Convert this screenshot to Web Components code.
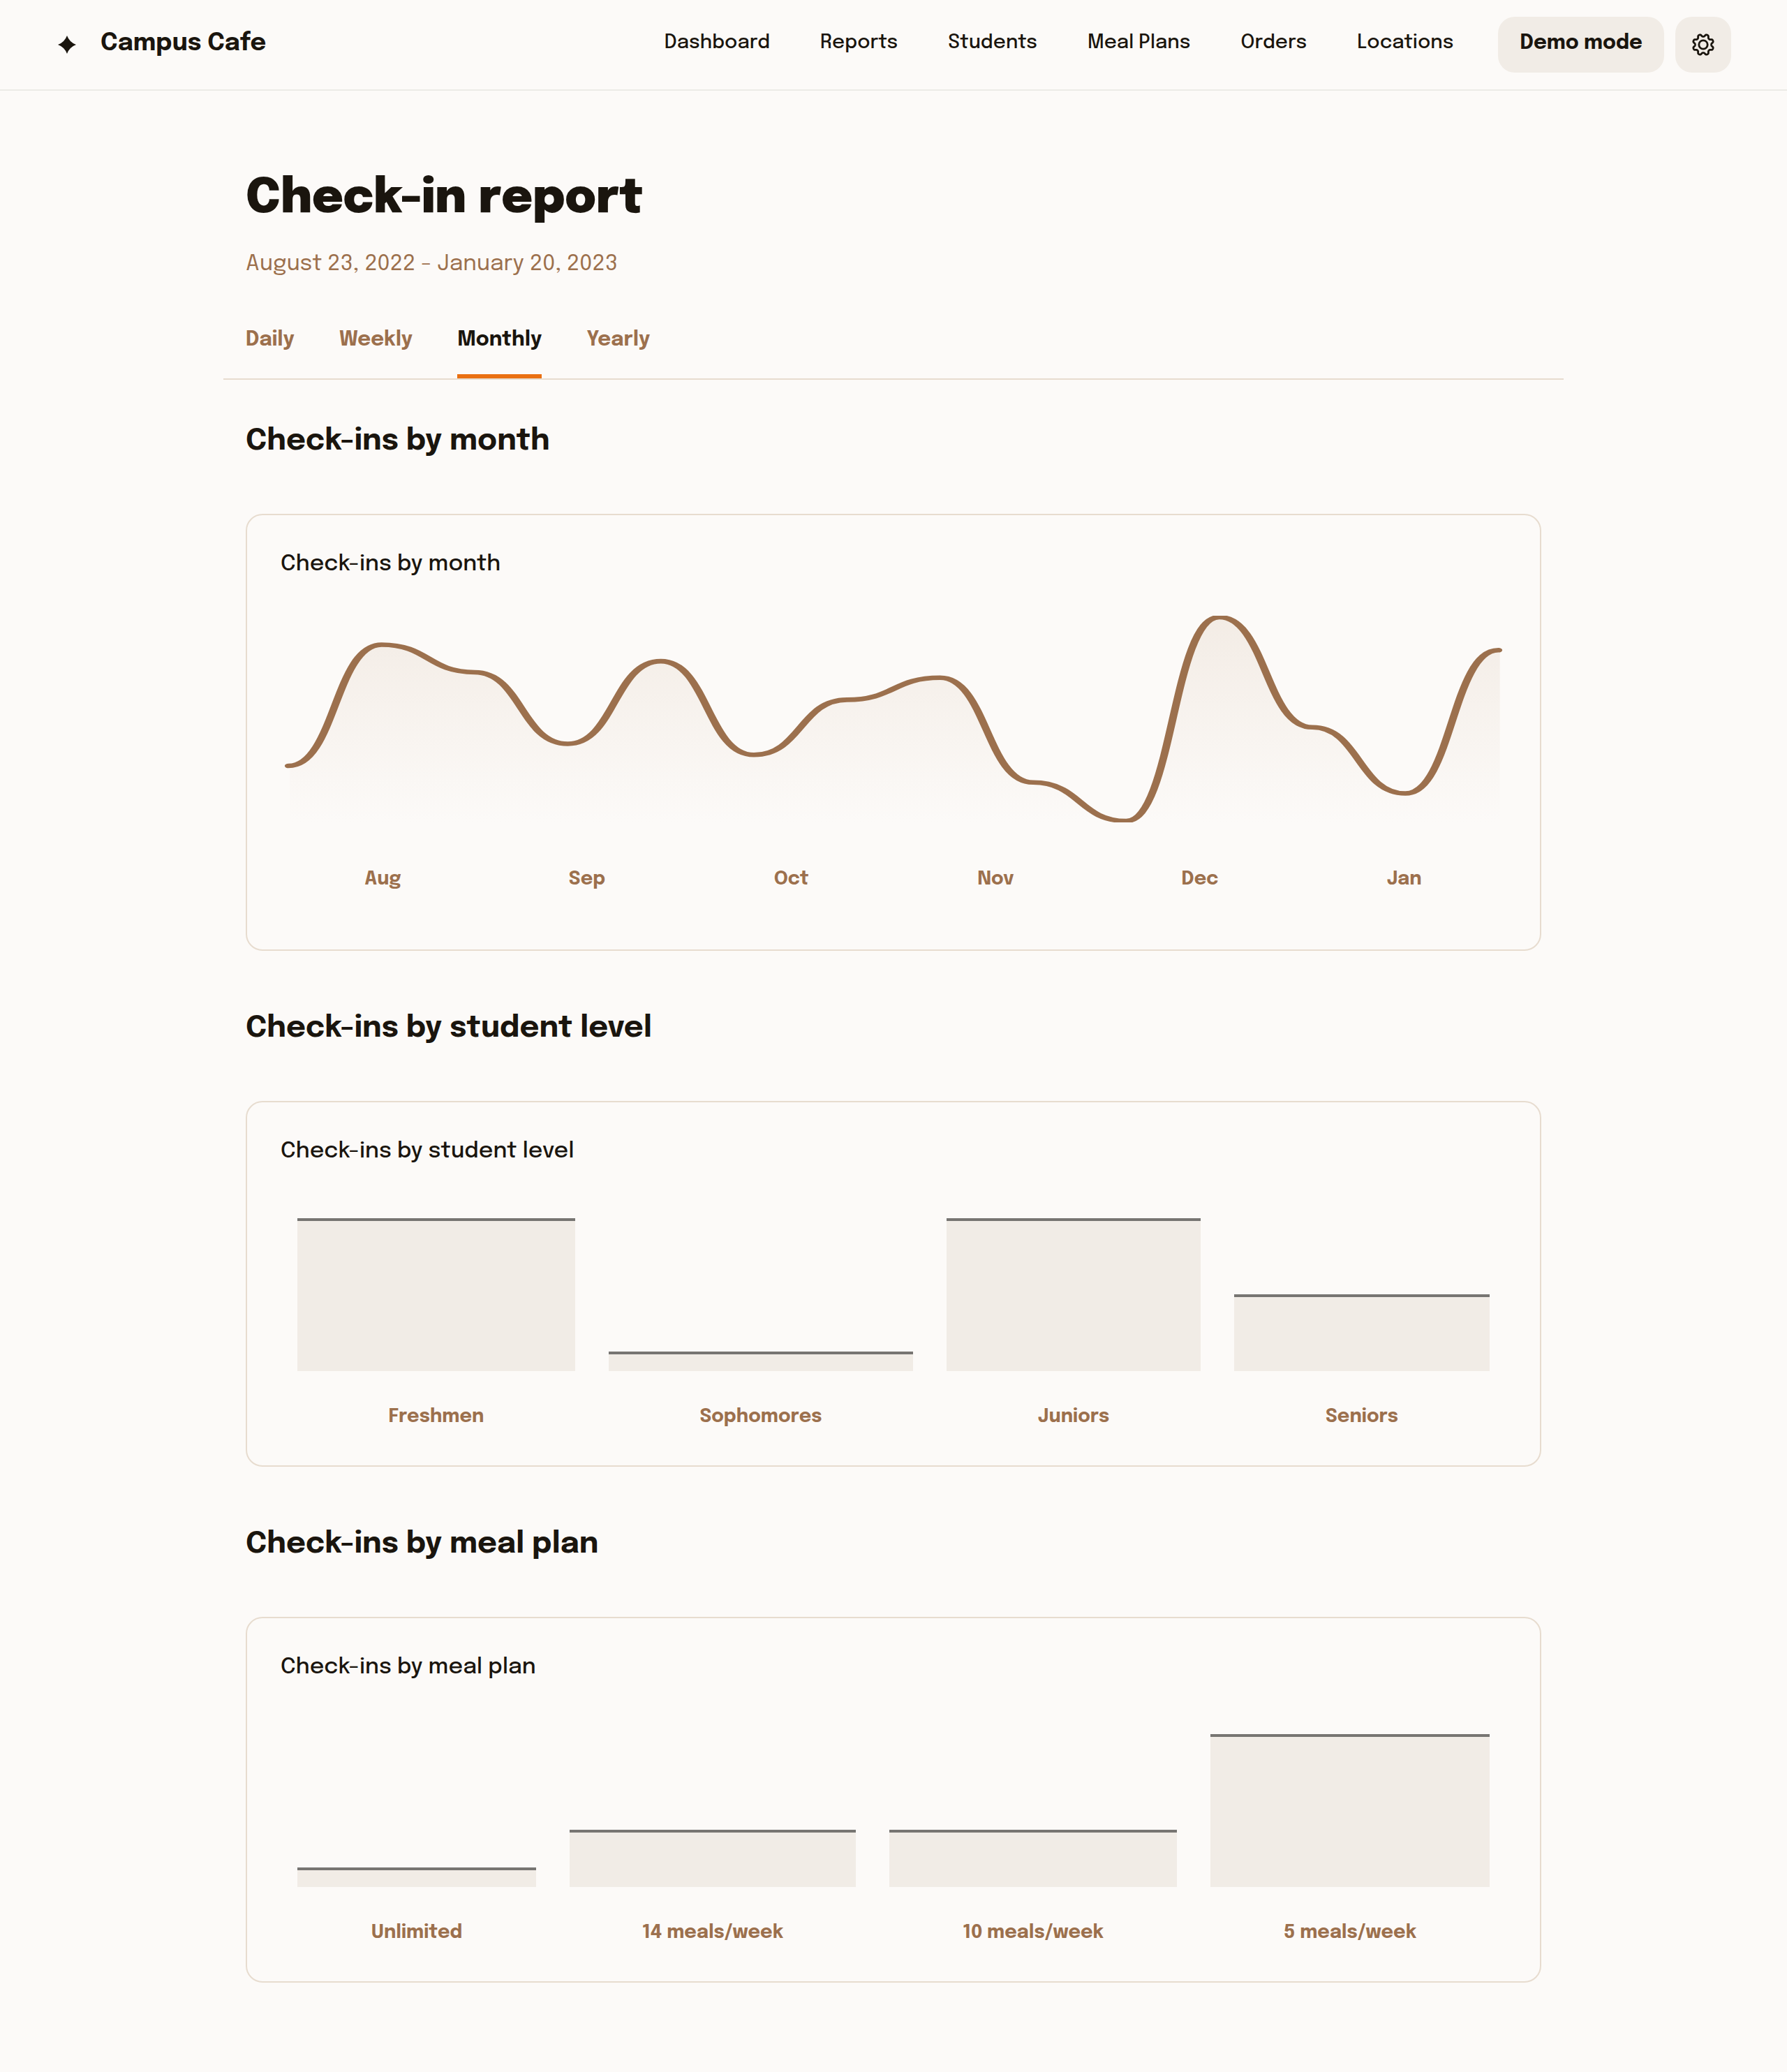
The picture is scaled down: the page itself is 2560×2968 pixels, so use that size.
<!DOCTYPE html>
<html lang="en">
<head>
<meta charset="utf-8">
<meta name="viewport" content="width=device-width, initial-scale=1">
<title>Check-in report · Campus Cafe</title>
<style>
  :root {
    --bg: #fcfaf8;
    --ink: #1a150e;
    --brown: #9c704d;
    --sand: #f1ece6;
    --line: #e7dccf;
    --hairline: #ecebe7;
    --bar-top: #777572;
    --accent: #ea7012;
  }
  body {
    margin: 0;
    background: var(--bg);
    color: var(--ink);
    font-family: Epilogue, Inter, "Liberation Sans", sans-serif;
  }
</style>
</head>
<body>
<campus-header>
  <span slot="brand">Campus Cafe</span>
  <nav-link href="#dashboard">Dashboard</nav-link>
  <nav-link href="#reports">Reports</nav-link>
  <nav-link href="#students">Students</nav-link>
  <nav-link href="#meal-plans">Meal Plans</nav-link>
  <nav-link href="#orders">Orders</nav-link>
  <nav-link href="#locations">Locations</nav-link>
  <soft-button slot="actions">Demo mode</soft-button>
  <soft-button slot="actions" icon label="Settings"><gear-icon></gear-icon></soft-button>
</campus-header>

<report-page>
  <span slot="title">Check-in report</span>
  <span slot="range">August 23, 2022 - January 20, 2023</span>
  <report-tab slot="tabs" href="#daily">Daily</report-tab>
  <report-tab slot="tabs" href="#weekly">Weekly</report-tab>
  <report-tab slot="tabs" href="#monthly" selected>Monthly</report-tab>
  <report-tab slot="tabs" href="#yearly">Yearly</report-tab>

  <report-section heading="Check-ins by month">
    <line-chart
      values="54.5 10.5 20.5 46.5 16.5 50.5 30.5 22.5 60.5 74.5 0.5 40.5 64.5 12.5"
      labels="Aug,Sep,Oct,Nov,Dec,Jan"></line-chart>
  </report-section>
  <report-section heading="Check-ins by student level">
    <bar-chart>
      <chart-bar size="398" height="219">Freshmen</chart-bar>
      <chart-bar size="436" height="28">Sophomores</chart-bar>
      <chart-bar size="364" height="219">Juniors</chart-bar>
      <chart-bar size="366" height="110">Seniors</chart-bar>
    </bar-chart>
  </report-section>
  <report-section heading="Check-ins by meal plan">
    <bar-chart>
      <chart-bar size="342" height="28">Unlimited</chart-bar>
      <chart-bar size="410" height="82">14 meals/week</chart-bar>
      <chart-bar size="412" height="82">10 meals/week</chart-bar>
      <chart-bar size="400" height="219">5 meals/week</chart-bar>
    </bar-chart>
  </report-section>
</report-page>

<script>
  class BaseElement extends HTMLElement {
    constructor() {
      super();
      this.attachShadow({ mode: 'open' });
    }
    connectedCallback() {
      this.shadowRoot.innerHTML = this.render();
    }
  }

  customElements.define('campus-header', class extends BaseElement {
    render() {
      return `
        <style>
          :host { display: block; border-bottom: 2px solid var(--hairline); }
          header { display: flex; align-items: center; height: 128px; padding: 0 80px; }
          .brand { display: flex; align-items: center; gap: 32px; color: inherit; text-decoration: none;
                   font-size: 35px; font-weight: 700; line-height: 44px; }
          .brand svg { width: 32px; height: 32px; display: block; }
          .brand slot { display: block; padding-bottom: 4px; }
          nav { display: flex; gap: 72px; margin-left: auto; }
          .actions { display: flex; gap: 16px; margin-left: 64px; }
        </style>
        <header>
          <a class="brand" href="#home">
            <svg viewBox="-16 -16 32 32" aria-hidden="true"><path fill="currentColor" d="M0-13Q3.5-3.5 13 0Q3.5 3.5 0 13Q-3.5 3.5-13 0Q-3.5-3.5 0-13Z"/></svg>
            <slot name="brand"></slot>
          </a>
          <nav aria-label="Main"><slot></slot></nav>
          <div class="actions"><slot name="actions"></slot></div>
        </header>`;
    }
  });

  customElements.define('nav-link', class extends BaseElement {
    render() {
      return `
        <style>
          :host { display: block; }
          a { display: block; padding-bottom: 4px; color: inherit; text-decoration: none;
              font-size: 28px; font-weight: 500; line-height: 40px; white-space: nowrap; }
        </style>
        <a href="${this.getAttribute('href')}"><slot></slot></a>`;
    }
  });

  customElements.define('soft-button', class extends BaseElement {
    render() {
      const label = this.getAttribute('label');
      return `
        <style>
          :host { display: block; }
          button { display: flex; align-items: center; justify-content: center; height: 80px;
                   padding: 0 31px 4px; border: 0; border-radius: 24px; background: var(--sand);
                   color: inherit; font: inherit; font-size: 29px; font-weight: 700; line-height: 40px;
                   white-space: nowrap; cursor: pointer; }
          :host([icon]) button { width: 80px; padding: 0; }
        </style>
        <button type="button"${label ? ` aria-label="${label}"` : ''}><slot></slot></button>`;
    }
  });

  customElements.define('gear-icon', class extends BaseElement {
    render() {
      // Eight rounded teeth: the radius swings between valley and tip.
      const steps = 192;
      let d = '';
      for (let i = 0; i < steps; i++) {
        const a = (i / steps) * Math.PI * 2;
        const wave = Math.cos(8 * (a - Math.PI / 8));
        const r = 13.3 + 1.7 * Math.tanh(1.6 * wave) / Math.tanh(1.6);
        d += `${i ? 'L' : 'M'}${(r * Math.cos(a)).toFixed(2)} ${(r * Math.sin(a)).toFixed(2)}`;
      }
      return `
        <style>
          :host { display: block; width: 40px; height: 40px; }
          svg { display: block; width: 100%; height: 100%; }
        </style>
        <svg viewBox="-20 -20 40 40" fill="none" stroke="currentColor" stroke-width="2.8" stroke-linejoin="round" aria-hidden="true">
          <path d="${d}Z"/><circle r="6.2"/>
        </svg>`;
    }
  });

  customElements.define('report-page', class extends BaseElement {
    render() {
      return `
        <style>
          :host { display: block; max-width: 1920px; margin: 0 auto; padding: 111px 0 128px; }
          .intro { padding: 0 32px; }
          h1, p { margin: 0; }
          h1 { font-size: 68px; font-weight: 900; line-height: 88px; }
          p { margin-top: 30px; color: var(--brown); font-size: 32px; line-height: 40px; }
          nav { display: flex; gap: 64px; margin-top: 68px; padding: 0 32px; border-bottom: 2px solid var(--line); }
          .sections { display: flex; flex-direction: column; gap: 83px; padding: 60px 32px 0; }
        </style>
        <main>
          <div class="intro">
            <h1><slot name="title"></slot></h1>
            <p><slot name="range"></slot></p>
          </div>
          <nav aria-label="Period"><slot name="tabs"></slot></nav>
          <div class="sections"><slot></slot></div>
        </main>`;
    }
  });

  customElements.define('report-tab', class extends BaseElement {
    render() {
      return `
        <style>
          :host { display: block; }
          a { display: block; padding-bottom: 29px; border-bottom: 6px solid transparent; color: var(--brown);
              text-decoration: none; font-size: 29px; font-weight: 700; line-height: 40px; }
          :host([selected]) a { color: var(--ink); border-color: var(--accent); }
        </style>
        <a href="${this.getAttribute('href')}"${this.hasAttribute('selected') ? ' aria-current="page"' : ''}><slot></slot></a>`;
    }
  });

  customElements.define('report-section', class extends BaseElement {
    render() {
      const heading = this.getAttribute('heading');
      return `
        <style>
          :host { display: block; }
          h2, h3 { margin: 0; }
          h2 { font-size: 43px; font-weight: 700; line-height: 56px; }
          .card { margin-top: 76px; padding: 51px 48px 48px; border: 2px solid var(--line); border-radius: 24px; }
          h3 { font-size: 32px; font-weight: 500; line-height: 40px; }
        </style>
        <section>
          <h2>${heading}</h2>
          <div class="card"><h3>${heading}</h3><slot></slot></div>
        </section>`;
    }
  });

  customElements.define('line-chart', class extends BaseElement {
    render() {
      const values = this.getAttribute('values').split(' ').map(Number);
      const step = 20, start = 2, height = 75;
      const width = start * 2 + step * (values.length - 1);
      let line = `M${start} ${values[0]}`;
      for (let i = 1; i < values.length; i++) {
        const x = start + i * step, mid = x - step / 2;
        line += `C${mid} ${values[i - 1]} ${mid} ${values[i]} ${x} ${values[i]}`;
      }
      const labels = this.getAttribute('labels').split(',').map(t => `<li>${t}</li>`).join('');
      return `
        <style>
          :host { display: block; padding: 53px 0 36px; }
          .plot { margin: 0 -2px; }
          svg { display: block; width: 100%; height: 296px; }
          ul { display: flex; margin: 66px 0 0; padding: 0; list-style: none; color: var(--brown);
               font-size: 27px; font-weight: 700; line-height: 32px; text-align: center; }
          li { flex: 1; }
        </style>
        <div class="plot">
          <svg viewBox="0 0 ${width} ${height}" preserveAspectRatio="none" fill="none" aria-hidden="true">
            <defs>
              <linearGradient id="fade" x1="0" y1="0" x2="0" y2="1">
                <stop offset="0" stop-color="#f3ece5"/>
                <stop offset="1" stop-color="#f3ece5" stop-opacity="0"/>
              </linearGradient>
            </defs>
            <path d="${line}V${height}H${start}Z" transform="translate(0.3 0)" fill="url(#fade)"/>
            <path d="${line}" stroke="#9c704d" stroke-width="1.65" stroke-linecap="round"/>
          </svg>
        </div>
        <ul>${labels}</ul>`;
    }
  });

  customElements.define('bar-chart', class extends BaseElement {
    render() {
      return `
        <style>
          :host { display: flex; align-items: flex-end; gap: 48px; padding: 75px 24px 5px; }
        </style>
        <slot></slot>`;
    }
  });

  customElements.define('chart-bar', class extends BaseElement {
    render() {
      return `
        <style>
          :host { display: block; flex: ${this.getAttribute('size')} 1 0; }
          .bar { box-sizing: border-box; height: ${this.getAttribute('height')}px; background: var(--sand);
                 border-top: 4px solid var(--bar-top); }
          .label { margin-top: 50px; color: var(--brown); font-size: 27px; font-weight: 700;
                   line-height: 32px; text-align: center; white-space: nowrap; }
        </style>
        <div class="bar"></div>
        <div class="label"><slot></slot></div>`;
    }
  });
</script>
</body>
</html>
